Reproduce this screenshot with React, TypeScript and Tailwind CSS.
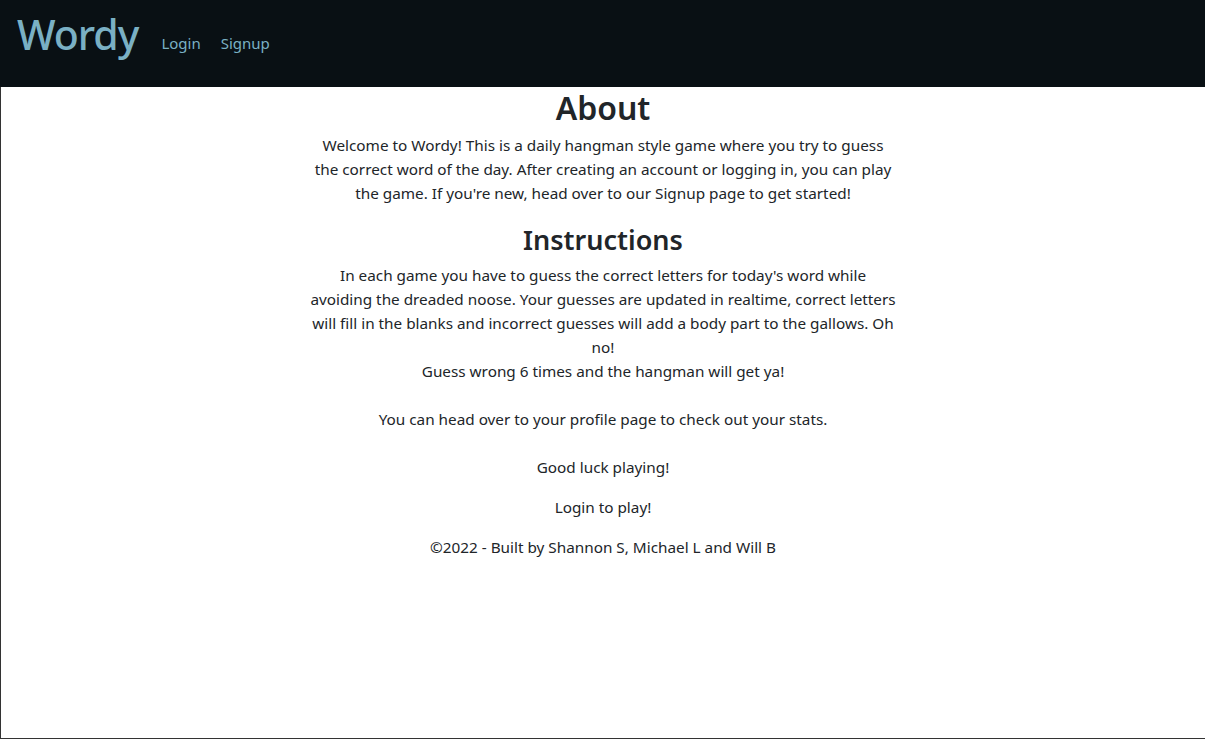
import React from 'react';

const font = { fontFamily: '"Noto Sans", "Open Sans", sans-serif' };

export default function App() {
  return (
    <div className="min-h-[739px] flex flex-col bg-white text-[#212529]" style={font}>
      <header className="h-[87px] shrink-0 bg-[#091014] flex items-start px-[17px]">
        <a className="text-[41px] leading-none mt-[14px] text-[#7ab0c4] font-medium tracking-[-1px]">Wordy</a>
        <nav className="flex gap-[20px] ml-[23px] mt-[32px] text-[15px] text-[#7ab0c4]">
          <a>Login</a>
          <a>Signup</a>
        </nav>
      </header>
      <main className="flex-1 border-l border-b border-[#333] flex flex-col items-center text-center text-[15.3px] leading-[24px]">
        <h1 className="text-[32px] leading-[40px] font-semibold mt-[1px] mb-[5px]">About</h1>
        <p className="w-[620px]">
          Welcome to Wordy! This is a daily hangman style game where you try to guess
          <br />
          the correct word of the day. After creating an account or logging in, you can play
          <br />
          the game. If you're new, head over to our Signup page to get started!
        </p>
        <h2 className="text-[27px] leading-[34px] font-semibold mt-[18px] mb-[6px]">Instructions</h2>
        <p className="w-[620px]">
          In each game you have to guess the correct letters for today's word while
          <br />
          avoiding the dreaded noose. Your guesses are updated in realtime, correct letters
          <br />
          will fill in the blanks and incorrect guesses will add a body part to the gallows. Oh
          <br />
          no!
          <br />
          Guess wrong 6 times and the hangman will get ya!
          <br />
          <br />
          You can head over to your profile page to check out your stats.
          <br />
          <br />
          Good luck playing!
        </p>
        <p className="mt-[16px]">Login to play!</p>
        <p className="mt-[16px]">©2022 - Built by Shannon S, Michael L and Will B</p>
      </main>
    </div>
  );
}
